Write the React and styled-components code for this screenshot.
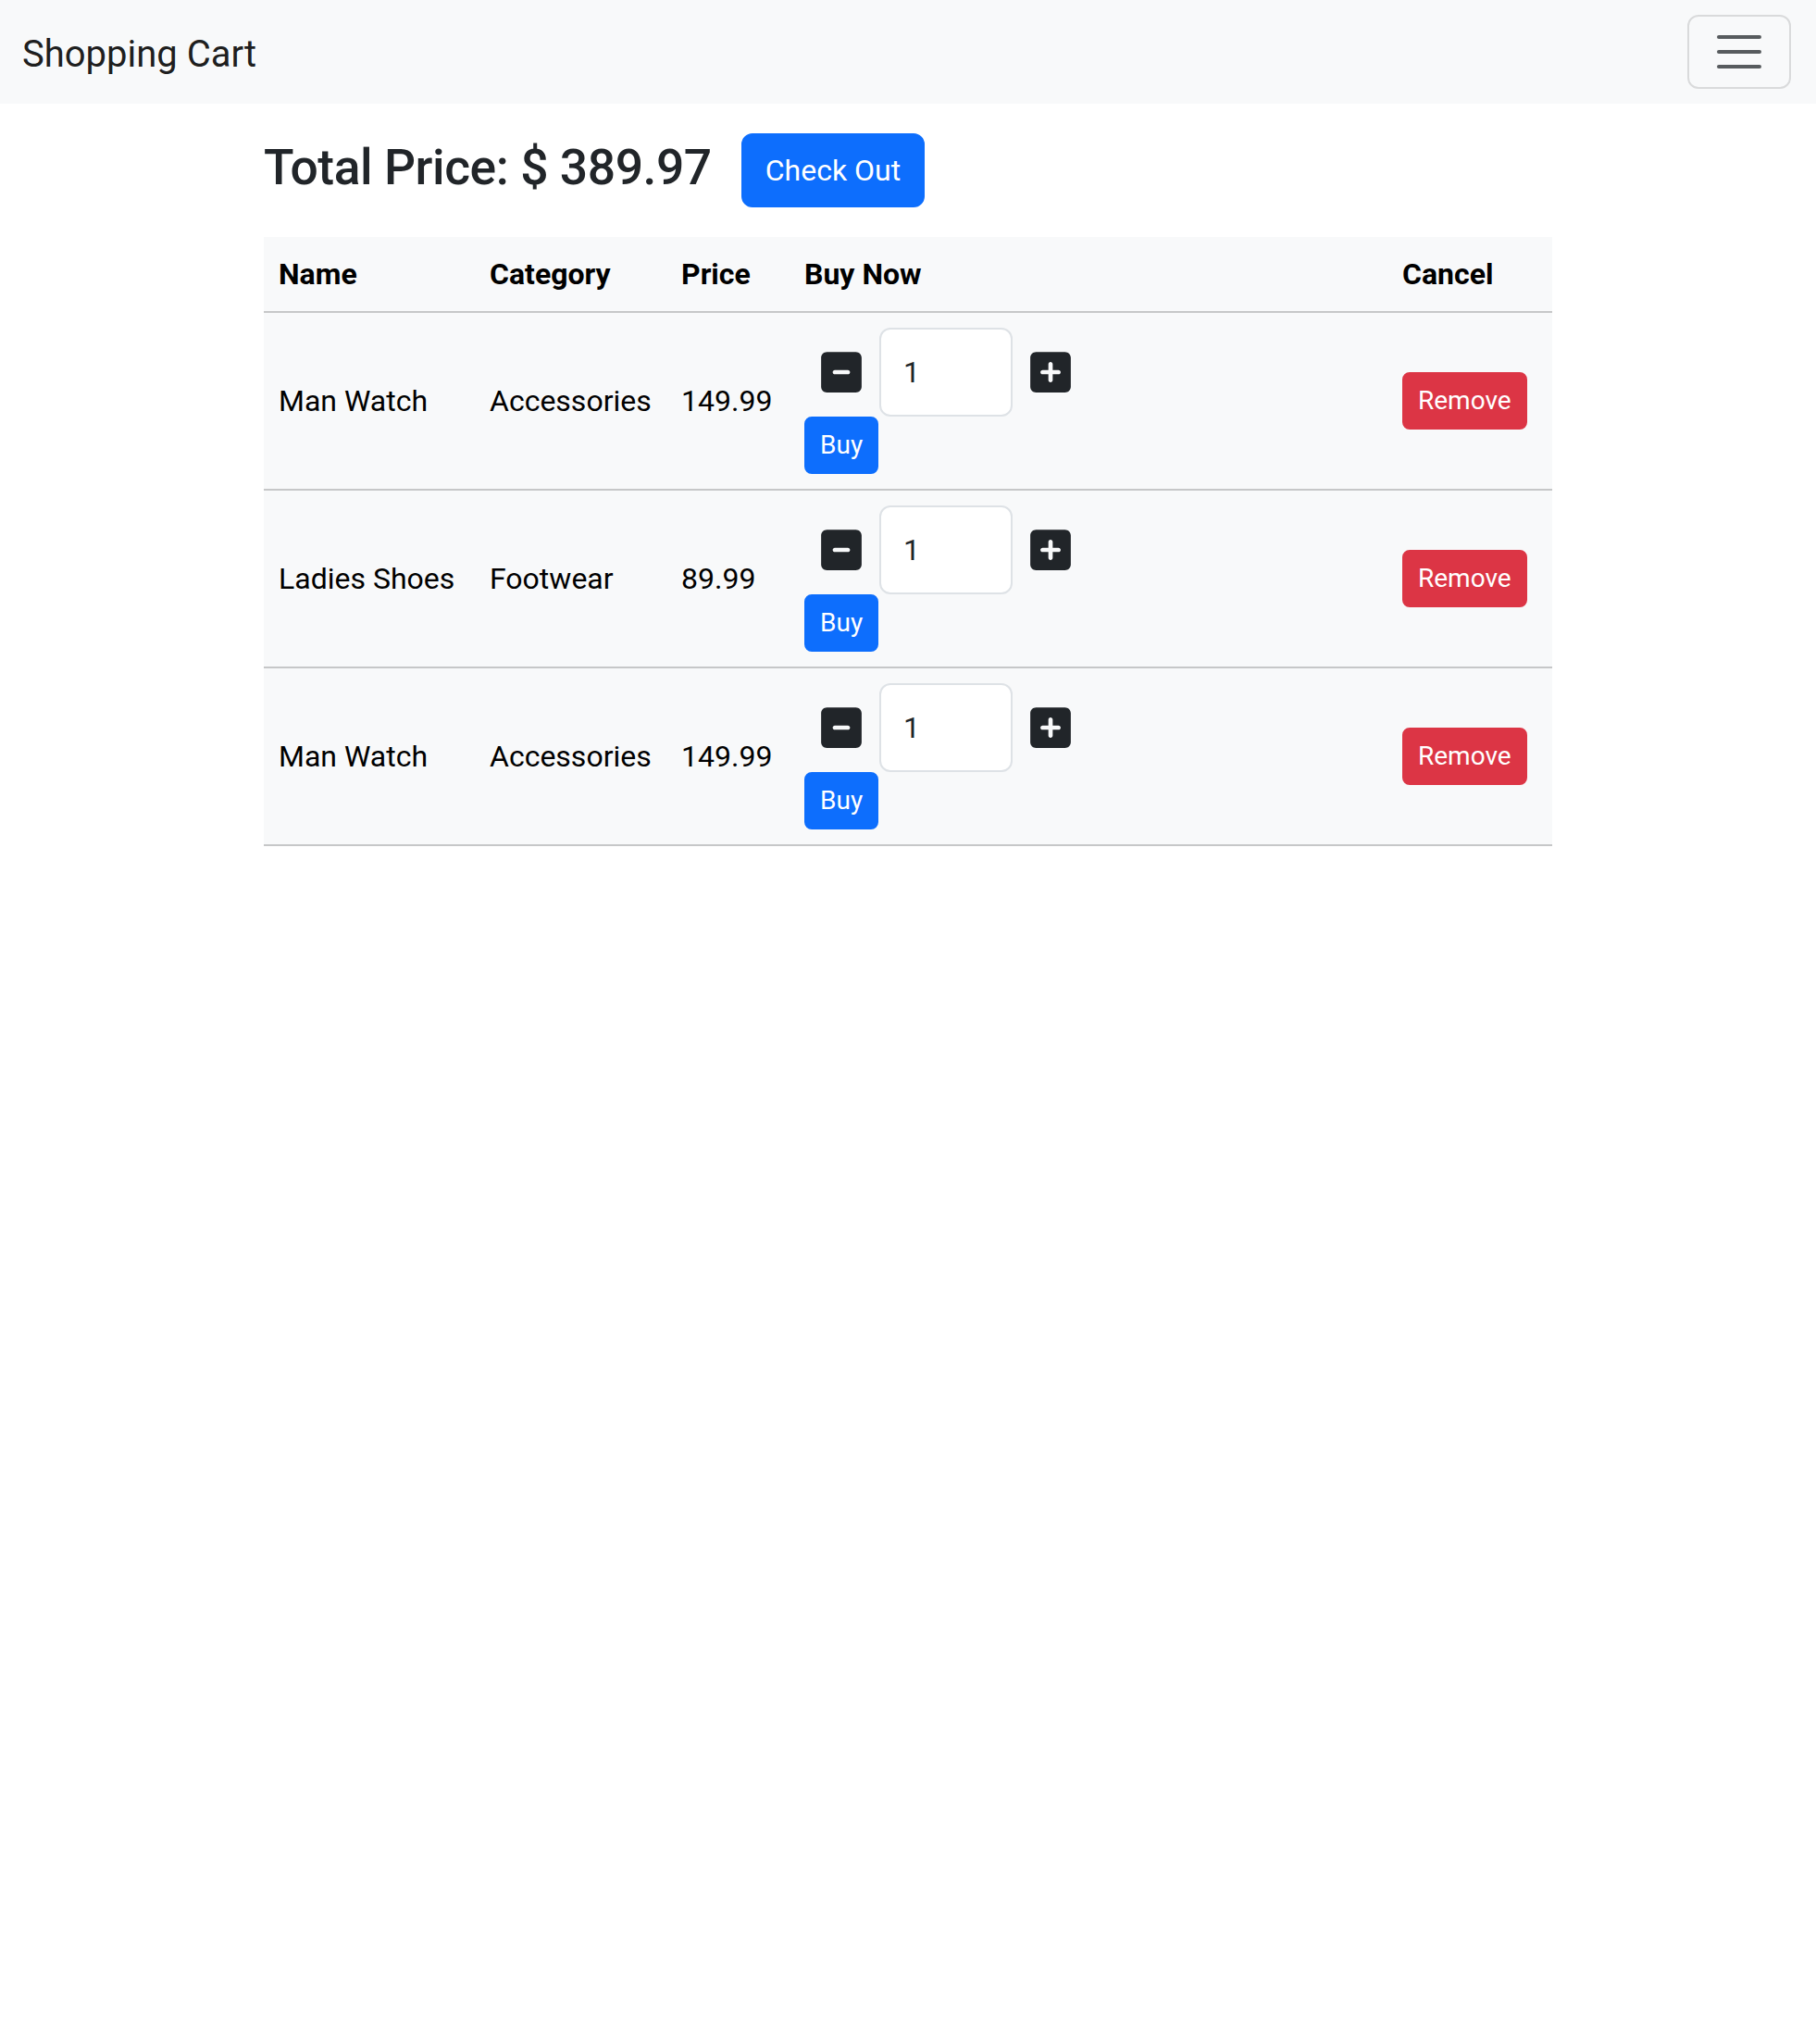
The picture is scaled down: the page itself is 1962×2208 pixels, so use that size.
import React, { useState } from "react";
import styled, { createGlobalStyle } from "styled-components";
import { FaSquareMinus, FaSquarePlus } from "react-icons/fa6";

const GlobalStyle = createGlobalStyle`
  html, body {
    margin: 0;
    padding: 0;
    background: #ffffff;
  }
  body {
    font-family: Roboto, "Liberation Sans", Arial, sans-serif;
    font-size: 32px;
    line-height: 1.5;
    color: #212529;
  }
  * { box-sizing: border-box; }
`;

const Navbar = styled.header`
  display: flex;
  align-items: center;
  justify-content: space-between;
  height: 112px;
  padding: 16px 27px 16px 24px;
  background: #f8f9fa;
`;

const Brand = styled.a`
  font-size: 40px;
  line-height: 60px;
  padding: 13px 0 7px;
  color: rgba(0, 0, 0, 0.9);
  text-decoration: none;
`;

const Toggler = styled.button`
  display: flex;
  align-items: center;
  justify-content: center;
  width: 112px;
  height: 80px;
  padding: 8px 24px;
  background: transparent;
  border: 2px solid rgba(0, 0, 0, 0.12);
  border-radius: 12px;
  cursor: pointer;
`;

const Container = styled.main`
  max-width: 1440px;
  margin: 0 auto;
  padding: 0 24px;
`;

const TotalRow = styled.div`
  display: flex;
  align-items: center;
  gap: 32px;
  padding-top: 32px;
`;

const Title = styled.h3`
  margin: 0;
  padding-bottom: 6px;
  font-size: 53.4px;
  font-weight: 500;
  line-height: 1.2;
  letter-spacing: -0.45px;
  color: #212529;
`;

const Button = styled.button`
  font-family: inherit;
  color: #ffffff;
  border: 2px solid ${(p) => p.$color};
  background: ${(p) => p.$color};
  font-size: ${(p) => (p.$small ? "28px" : "32px")};
  line-height: ${(p) => (p.$small ? "42px" : "48px")};
  padding: ${(p) => (p.$small ? "8px 15px" : "14px 24px")};
  border-radius: ${(p) => (p.$small ? "8px" : "12px")};
  cursor: pointer;
  white-space: nowrap;
`;

const Table = styled.table`
  width: 100%;
  margin-top: 32px;
  border-collapse: collapse;
  table-layout: fixed;
  background: #f8f9fa;
  color: #000;
`;

const Th = styled.th`
  text-align: left;
  font-weight: 700;
  font-size: 32px;
  line-height: 48px;
  padding: 16px;
  vertical-align: bottom;
  border-bottom: 2px solid #c6c7c8;
`;

const Td = styled.td`
  font-size: 32px;
  line-height: 48px;
  padding: 16px;
  vertical-align: middle;
  border-bottom: 2px solid #c6c7c8;
  white-space: nowrap;
`;

const BuyCell = styled.div`
  display: flex;
  flex-direction: column;
  align-items: flex-start;
`;

const QtyRow = styled.div`
  display: flex;
  align-items: center;
  gap: 16px;
  padding-left: 15px;
`;

const IconButton = styled.span`
  display: inline-flex;
  color: #212529;
  cursor: pointer;
`;

const QtyInput = styled.input`
  width: 144px;
  height: 96px;
  padding: 0 24px;
  font-family: inherit;
  font-size: 32px;
  color: #212529;
  background: #ffffff;
  border: 2px solid #dee2e6;
  border-radius: 12px;
  outline: none;
`;

const items = [
  { name: "Man Watch", category: "Accessories", price: "149.99" },
  { name: "Ladies Shoes", category: "Footwear", price: "89.99" },
  { name: "Man Watch", category: "Accessories", price: "149.99" },
];

const colWidths = [228, 207, 133, 646, 178];

function CartRow({ item }) {
  const [qty, setQty] = useState(1);
  return (
    <tr>
      <Td>{item.name}</Td>
      <Td>{item.category}</Td>
      <Td>{item.price}</Td>
      <Td>
        <BuyCell>
          <QtyRow>
            <IconButton onClick={() => setQty((q) => Math.max(1, q - 1))}>
              <FaSquareMinus size={50} />
            </IconButton>
            <QtyInput
              type="text"
              value={qty}
              onChange={(e) => setQty(e.target.value)}
            />
            <IconButton onClick={() => setQty((q) => Number(q) + 1)}>
              <FaSquarePlus size={50} />
            </IconButton>
          </QtyRow>
          <Button $small $color="#0d6efd">Buy</Button>
        </BuyCell>
      </Td>
      <Td>
        <Button $small $color="#dc3545">Remove</Button>
      </Td>
    </tr>
  );
}

export default function App() {
  return (
    <>
      <GlobalStyle />
      <Navbar>
        <Brand href="#">Shopping Cart</Brand>
        <Toggler aria-label="Toggle navigation">
          <svg width="60" height="60" viewBox="0 0 30 30">
            <path
              d="M4 7h22M4 15h22M4 23h22"
              stroke="rgba(33,37,41,0.75)"
              strokeWidth="2"
              strokeLinecap="round"
              fill="none"
            />
          </svg>
        </Toggler>
      </Navbar>
      <Container>
        <TotalRow>
          <Title>Total Price: $ 389.97</Title>
          <Button $color="#0d6efd">Check Out</Button>
        </TotalRow>
        <Table>
          <colgroup>
            {colWidths.map((w, i) => (
              <col key={i} style={{ width: w }} />
            ))}
          </colgroup>
          <thead>
            <tr>
              <Th>Name</Th>
              <Th>Category</Th>
              <Th>Price</Th>
              <Th>Buy Now</Th>
              <Th>Cancel</Th>
            </tr>
          </thead>
          <tbody>
            {items.map((item, i) => (
              <CartRow key={i} item={item} />
            ))}
          </tbody>
        </Table>
      </Container>
    </>
  );
}
